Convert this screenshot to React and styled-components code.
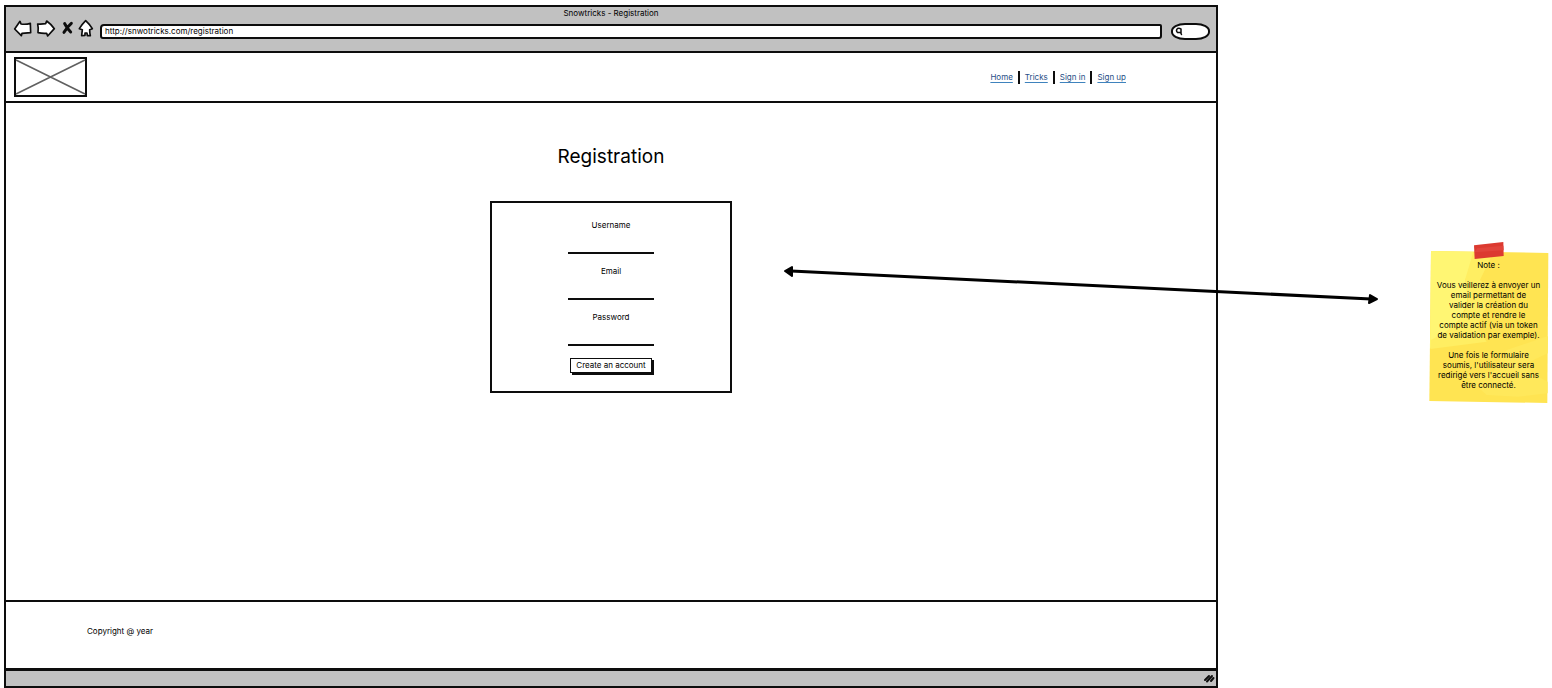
import React from 'react';
import styled, { createGlobalStyle } from 'styled-components';

const INK = '#0d0d0d';
const CHROME = '#c1c1c1';

const GlobalStyle = createGlobalStyle`
  *, *::before, *::after { box-sizing: border-box; }
  body {
    margin: 0;
    background: #fff;
    color: #000;
    font: 8px/10px Inter, "Open Sans", sans-serif;
  }
  button, input { font: inherit; color: inherit; }
`;

const Canvas = styled.div`
  position: relative;
  display: grid;
  grid-template-columns: minmax(0, 1fr) 119px;
  column-gap: 211px;
  min-height: 100vh;
  padding: 5px 4px 0;
`;

const BrowserWindow = styled.section`
  display: flex;
  flex-direction: column;
  border: 2px solid ${INK};
  background: #fff;
`;

const Chrome = styled.header`
  background: ${CHROME};
  border-bottom: 2px solid ${INK};
`;

const WindowTitle = styled.div`
  padding-bottom: 1px;
  line-height: 12px;
  text-align: center;
`;

const Toolbar = styled.div`
  display: flex;
  align-items: flex-start;
  padding: 0 6px 11px 8px;
`;

const IconButton = styled.button`
  width: ${({ $width }) => $width}px;
  height: 18px;
  margin-right: 6px;
  padding: 0;
  border: 0;
  background: none;
  svg {
    display: block;
    width: 100%;
    height: 100%;
    overflow: visible;
  }
`;

const AddressBar = styled.input`
  flex: 1;
  min-width: 0;
  height: 15px;
  margin: 4px 9px 0 1px;
  padding: 0 3px 2px;
  border: 2px solid ${INK};
  border-radius: 4px 2px 3px 3px;
  background: #fff;
`;

const SearchBox = styled.label`
  display: flex;
  align-items: center;
  width: 39px;
  height: 17px;
  margin-top: 3px;
  padding-left: 2px;
  border: 2px solid ${INK};
  border-radius: 14px / 8px;
  background: #fff;
  svg { flex: none; width: 8px; height: 9px; }
`;

const SearchInput = styled.input`
  width: 22px;
  height: 10px;
  padding: 0;
  border: 0;
  background: none;
  outline: 0;
`;

const SiteHeader = styled.div`
  display: flex;
  align-items: center;
  justify-content: space-between;
  padding: 4px 90px 4px 8px;
  border-bottom: 2px solid ${INK};
`;

const Logo = styled.svg`
  display: block;
  width: 73px;
  height: 40px;
`;

const Nav = styled.nav`
  display: flex;
  align-items: center;
`;

const NavLink = styled.a`
  color: #1f4e85;
  text-decoration: underline;
  text-decoration-color: #3f83bd;
  text-underline-offset: 2px;
  & + & {
    display: flex;
    align-items: center;
  }
  & + &::before {
    content: "";
    width: 2px;
    height: 13px;
    margin: 0 5px;
    background: ${INK};
  }
`;

const Main = styled.main`
  flex: 1;
  display: flex;
  flex-direction: column;
  align-items: center;
  padding: 42px 16px;
`;

const Heading = styled.h1`
  margin: 0 0 32px;
  font-size: 19px;
  line-height: 24px;
  font-weight: 400;
`;

const Form = styled.form`
  display: flex;
  flex-direction: column;
  align-items: center;
  gap: 12px;
  width: 242px;
  padding: 17px 20px 18px;
  border: 2px solid ${INK};
`;

const Field = styled.label`
  display: flex;
  flex-direction: column;
  width: 86px;
  text-align: center;
`;

const FieldInput = styled.input`
  width: 100%;
  height: 24px;
  padding: 0;
  border: 0;
  border-bottom: 2px solid ${INK};
  background: none;
  text-align: center;
`;

const SubmitButton = styled.button`
  height: 15px;
  width: 82px;
  padding: 0 0 2px;
  border: 1px solid ${INK};
  background: #fff;
  box-shadow: 2px 2px 0 ${INK};
  line-height: 10px;
  white-space: nowrap;
`;

const SiteFooter = styled.footer`
  padding: 24px 81px 32px;
  border-top: 2px solid ${INK};
`;

const StatusBar = styled.div`
  display: flex;
  align-items: center;
  justify-content: flex-end;
  height: 18px;
  padding-right: 1px;
  border-top: 3px solid ${INK};
  background: ${CHROME};
  svg { width: 12px; height: 9px; }
`;

const Note = styled.aside`
  position: relative;
  align-self: start;
  height: 152px;
  margin-top: 246px;
  padding-top: 9px;
  text-align: center;
`;

const Paper = styled.svg`
  position: absolute;
  inset: 0;
  z-index: -1;
  width: 119px;
  height: 152px;
  overflow: visible;
`;

const NoteText = styled.p`
  margin: 0 0 10px;
  white-space: pre;
`;

const Connector = styled.svg`
  position: absolute;
  top: 264px;
  right: 174px;
  width: 594px;
  height: 42px;
  pointer-events: none;
`;

const outline = {
  fill: '#fff',
  stroke: INK,
  strokeWidth: 5,
  strokeLinejoin: 'round',
  strokeLinecap: 'round',
};

const links = ['Home', 'Tricks', 'Sign in', 'Sign up'];

const fields = [
  { name: 'username', label: 'Username', type: 'text' },
  { name: 'email', label: 'Email', type: 'email' },
  { name: 'password', label: 'Password', type: 'password' },
];

const noteParagraphs = [
  'Note :',
  'Vous veillerez à envoyer un\nemail permettant de\nvalider la création du\ncompte et rendre le\ncompte actif (via un token\nde validation par exemple).',
  "Une fois le formulaire\nsoumis, l'utilisateur sera\nredirigé vers l'accueil sans\nêtre connecté.",
];

function BrowserChrome() {
  return (
    <Chrome>
      <WindowTitle>Snowtricks - Registration</WindowTitle>
      <Toolbar>
        <IconButton type="button" $width={17} aria-label="Back">
          <svg viewBox="43 60 51 54">
            <path {...outline} d="M45 87 L61 64 L64 72 Q79 74 92 70 L93 98 L67 100 L65 107 Z" />
          </svg>
        </IconButton>
        <IconButton type="button" $width={18} aria-label="Forward">
          <svg viewBox="112 60 54 54">
            <path {...outline} d="M114 72 Q127 73 138 71 L141 63 Q155 73 164 86 L144 108 L141 100 Q128 101 115 98 Q117 85 114 72 Z" />
          </svg>
        </IconButton>
        <IconButton type="button" $width={12} aria-label="Stop">
          <svg viewBox="186 60 36 54">
            <path fill="none" stroke={INK} strokeWidth="9" strokeLinecap="round" d="M197 71 Q203 84 215 96 M217 70 Q205 80 195 97" />
          </svg>
        </IconButton>
        <IconButton type="button" $width={14} aria-label="Home page">
          <svg viewBox="238 60 42 54">
            <path {...outline} d="M239 86 Q247 73 258 62 Q270 73 278 86 L270 89 Q270 98 272 107 L263 107 L262 99 L256 99 L256 106 L246 107 L248 89 Z" />
          </svg>
        </IconButton>
        <AddressBar aria-label="Address" defaultValue="http://snwotricks.com/registration" />
        <SearchBox>
          <svg viewBox="0 0 8 9" fill="none" stroke={INK} strokeWidth="1.5" strokeLinecap="round">
            <path d="M2.5 1.5 Q4.5 1 6 2 L6 5.5 L2.5 5.5 Q0.5 3.5 2.5 1.5 M5.5 5.5 L6.5 7.5" />
          </svg>
          <SearchInput aria-label="Search" />
        </SearchBox>
      </Toolbar>
    </Chrome>
  );
}

function RegistrationForm() {
  return (
    <Form onSubmit={(event) => event.preventDefault()}>
      {fields.map(({ name, label, type }) => (
        <Field key={name}>
          {label}
          <FieldInput name={name} type={type} />
        </Field>
      ))}
      <SubmitButton type="submit">Create an account</SubmitButton>
    </Form>
  );
}

function StickyNote() {
  return (
    <Note>
      <Paper viewBox="267 63 357 456" aria-hidden="true">
        <path fill="#ffe452" d="M273 63 L625 69 L622 519 L268 513 Z" />
        <path fill="#fff673" d="M273 63 L400 65 Q400 110 375 150 Q400 210 345 290 L270 355 Z" />
        <path fill="#ffee62" d="M400 65 L460 67 L420 150 L460 185 L410 290 L440 335 L271 357 L272 330 Q360 290 385 220 L375 150 Z" />
        <path fill="#ffe85b" d="M500 360 L624 318 L623 370 L560 400 L575 430 L623 455 L623 490 L535 500 L440 495 L380 440 L460 425 Z" />
        <path fill="#dc3a30" d="M402 46 L490 36 L491 78 L404 87 Z" />
        <path fill="#e1443b" d="M411 55 L490 47 L491 61 L404 67 Z" />
      </Paper>
      {noteParagraphs.map((text) => (
        <NoteText key={text}>{text}</NoteText>
      ))}
    </Note>
  );
}

export default function App() {
  return (
    <>
      <GlobalStyle />
      <Canvas>
        <BrowserWindow>
          <BrowserChrome />
          <SiteHeader>
            <Logo viewBox="0 0 73 40" role="img" aria-label="Logo">
              <rect x="1" y="1" width="71" height="38" fill="#fff" stroke={INK} strokeWidth="2" />
              <path d="M2 3 L71 37 M2 37 L71 3" stroke="#606060" strokeWidth="1.6" />
            </Logo>
            <Nav>
              {links.map((label) => (
                <NavLink key={label} href="#">{label}</NavLink>
              ))}
            </Nav>
          </SiteHeader>
          <Main>
            <Heading>Registration</Heading>
            <RegistrationForm />
          </Main>
          <SiteFooter>Copyright @ year</SiteFooter>
          <StatusBar>
            <svg viewBox="0 0 12 9" stroke={INK} strokeWidth="2" strokeLinecap="round" aria-hidden="true">
              <path d="M2 6 L6 2 M4 7.5 L9 2 M8 7 L10.5 4" />
            </svg>
          </StatusBar>
        </BrowserWindow>
        <StickyNote />
        <Connector viewBox="0 0 594 42" aria-hidden="true">
          <path d="M7 7 L587 35" fill="none" stroke="#000" strokeWidth="3" />
          <path d="M1 7 L8 3 L8 12 Z M593 35 L586 31 L585 39 Z" fill="#000" stroke="#000" strokeWidth="2" strokeLinejoin="round" />
        </Connector>
      </Canvas>
    </>
  );
}
